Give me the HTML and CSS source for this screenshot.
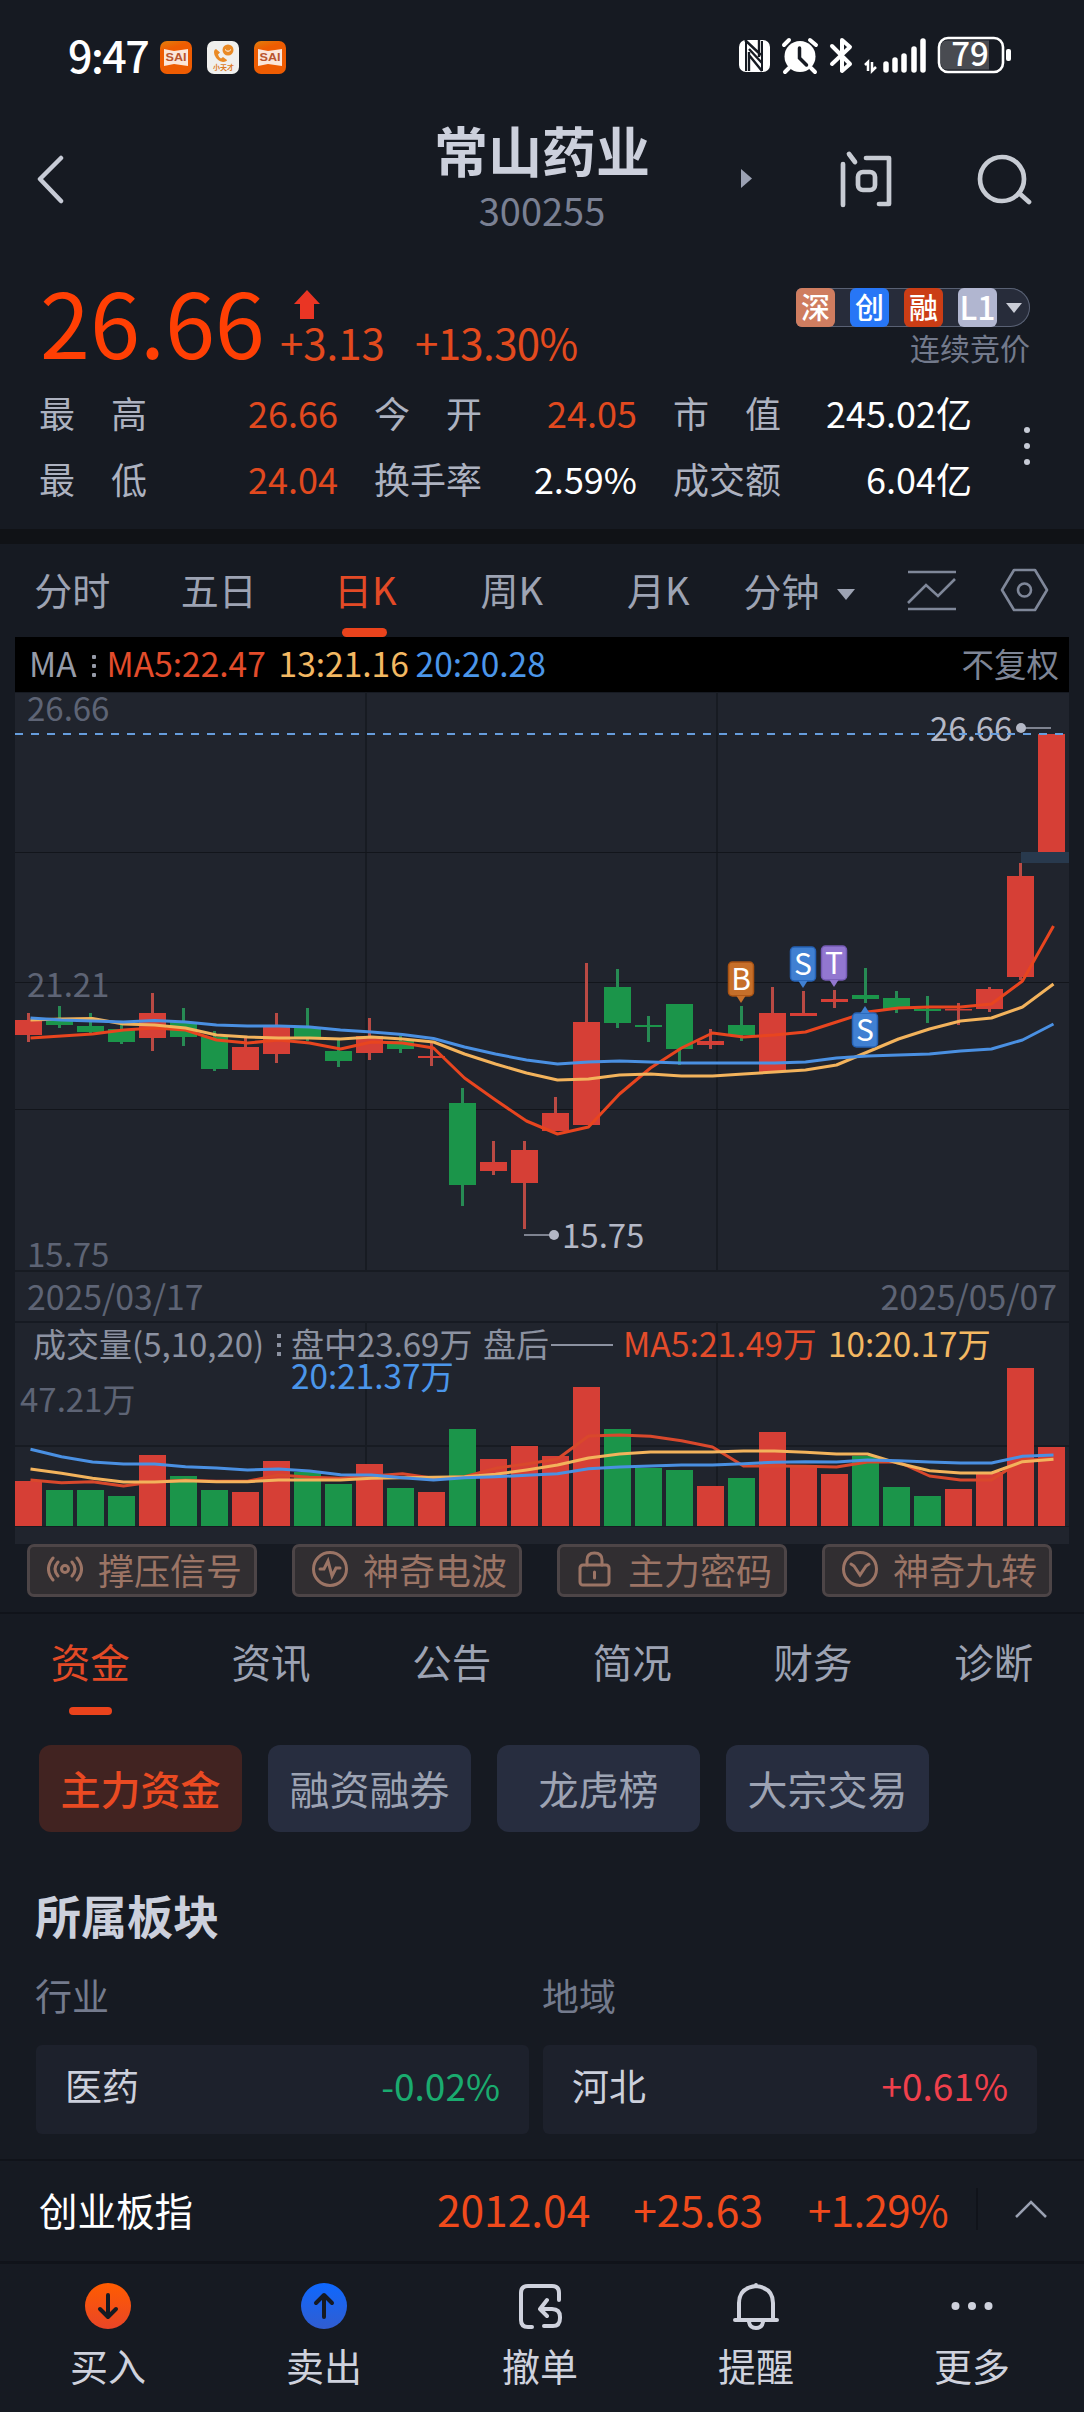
FILE: index.html
```html
<!DOCTYPE html>
<html lang="zh-CN">
<head>
<meta charset="utf-8">
<title>常山药业 300255</title>
<link rel="stylesheet" href="styles.css">
</head>
<body>
<div class="app">
  <div class="status">
    <span class="time">9:47</span>
    <span class="notices">
      <svg width="32" height="33" viewBox="0 0 32 33"><defs><linearGradient id="og" x1="0" y1="0" x2=".3" y2="1"><stop offset="0" stop-color="#e0800c"/><stop offset=".3" stop-color="#ee5c02"/></linearGradient></defs><rect width="32" height="33" rx="7" fill="url(#og)"/><path d="M4 8l10 2 14-2v17l-14-2-10 2z" fill="#fbe6da"/><text x="16" y="20" text-anchor="middle" textLength="21" lengthAdjust="spacingAndGlyphs" class="sai">SAI</text></svg>
      <svg width="32" height="33" viewBox="0 0 32 33"><rect width="32" height="33" rx="7" fill="#f0f0ee"/><circle cx="21" cy="9" r="5.500" fill="#ea8a25"/><path d="M18 8.500q3 3.500 6 0" stroke="#fff" fill="none"/><path d="M9 8q-3 1-1.500 6 2.500 6 8.500 7 4-.5 4-2l-4-3-2 1.500q-2.500-1.500-3-4l2-2z" fill="#ea8a25"/><text x="16.500" y="29" text-anchor="middle" class="xtc">小天才</text></svg>
      <svg width="32" height="33" viewBox="0 0 32 33"><rect width="32" height="33" rx="7" fill="url(#og)"/><path d="M4 8l10 2 14-2v17l-14-2-10 2z" fill="#fbe6da"/><text x="16" y="20" text-anchor="middle" textLength="21" lengthAdjust="spacingAndGlyphs" class="sai">SAI</text></svg>
    </span>
    <svg class="sysicons" width="275" height="40" viewBox="0 0 275 40">
      <rect x="0" y="5" width="31" height="32" rx="7" fill="#fff"/>
      <path d="M7 6v30M23 6v30" stroke="#161a22" stroke-width="2" fill="none"/><path d="M6 5L22 20M10 17v19M10 20l13 16M20 5v17M10 14l13 14" stroke="#161a22" stroke-width="2.400" fill="none"/>
      <circle cx="61" cy="21.500" r="15.500" fill="#fff"/><path d="M45 10l5-5M71 5l6 5M50 33l-4 4M72 33l4 4" stroke="#fff" stroke-width="4" stroke-linecap="round"/><path d="M60.500 13v10l7 7" stroke="#161a22" stroke-width="3.500" fill="none" stroke-linecap="round"/>
      <path d="M93 11l18 18-8 7V5l8 7-18 17" fill="none" stroke="#fff" stroke-width="4" stroke-linejoin="round" stroke-linecap="round"/>
      <path d="M126 30l3-3v9M133 27v9l4-4" fill="none" stroke="#fff" stroke-width="2.500"/>
      <path d="M147 29v6M156 25v10M165 21v14M175 14v21M184 6v29" stroke="#fff" stroke-width="5.500" stroke-linecap="round"/>
      <rect x="200" y="3" width="64" height="34" rx="9" fill="none" stroke="#fff" stroke-width="2.600"/><path d="M208 5.500h42v29h-42q-6 0-6-6v-17q0-6 6-6z" fill="#494b51"/>
      <rect x="267" y="14" width="5" height="12" rx="2" fill="#fff"/>
      <text x="231" y="31" text-anchor="middle" class="batt">79</text>
    </svg>
  </div>

  <header class="header">
    <svg class="back" width="28" height="50" viewBox="0 0 28 50"><path d="M25 4L4 25l21 22" fill="none" stroke="#c7cbd6" stroke-width="4.500" stroke-linecap="round" stroke-linejoin="round"/></svg>
    <div class="title"><h1>常山药业</h1><span class="code">300255</span></div>
    <svg class="headicons" width="300" height="60" viewBox="0 0 300 60">
      <path d="M4 20l11 9.500-11 9.500z" fill="#9ba1b3"/>
      <g fill="none" stroke="#c7cbd3" stroke-width="4.700" stroke-linecap="round" stroke-linejoin="round"><path d="M106 15v41M112 5l6 8M129 9h23v46h-10"/><rect x="121" y="23" width="17" height="18" rx="5"/><circle cx="265" cy="30" r="22"/><path d="M282 44l10 9"/></g>
    </svg>
  </header>

  <section class="quote">
    <div class="pricerow">
      <span class="price">26.66</span>
      <div class="delta">
        <svg width="26" height="30" viewBox="0 0 26 30"><path d="M13 0l13 14h-6v15H6V14H0z" fill="#ea3524"/></svg>
        <div><span>+3.13</span><span class="pct">+13.30%</span></div>
      </div>
      <div class="market">
        <div class="badges"><b class="b1">深</b><b class="b2">创</b><b class="b3">融</b><b class="b4">L1</b><i></i></div>
        <span>连续竞价</span>
      </div>
    </div>
    <div class="stats">
      <div class="grid">
        <span>最　高</span><em class="up">26.66</em><span>今　开</span><em class="up">24.05</em><span>市　值</span><em>245.02亿</em>
        <span>最　低</span><em class="up">24.04</em><span>换手率</span><em>2.59%</em><span>成交额</span><em>6.04亿</em>
      </div>
      <div class="vdots"><i></i><i></i><i></i></div>
    </div>
  </section>

  <nav class="periods">
    <a>分时</a><a>五日</a><a class="on">日K</a><a>周K</a><a>月K</a>
    <div class="minute">分钟<i></i></div>
    <svg width="150" height="48" viewBox="0 0 150 48" fill="none" stroke="#7f8799" stroke-width="2.600"><path d="M1 6h48M1 43h48M1 37l18-18 12 11L48 13"/><path d="M107 4h21l12 20-12 20h-21L95 24z" stroke-linejoin="round"/><circle cx="117.500" cy="24" r="6.500"/></svg>
  </nav>

  <section class="chart">
    <div class="maline"><span>MA</span><u class="colon"><i></i><i></i><i></i></u><span class="c5">MA5:22.47</span><span class="c10">13:21.16</span><span class="c20">20:20.28</span><span class="adj">不复权</span></div>
    <svg id="kline" width="1054" height="629" viewBox="15 692 1054 629"></svg>
    <svg id="volume" width="1054" height="223" viewBox="15 1321 1054 223"></svg>
  </section>

  <div class="signals">
    <div><svg width="36" height="36" viewBox="0 0 36 36"><circle cx="18" cy="18" r="3.500"/><path d="M11 11q-6 7 0 14M25 11q6 7 0 14M6 7q-9 11 0 22M30 7q9 11 0 22"/></svg>撑压信号</div>
    <div><svg width="36" height="36" viewBox="0 0 36 36"><circle cx="18" cy="18" r="16.500"/><path d="M8 18h4l4-8 4 15 4-8h4"/></svg>神奇电波</div>
    <div><svg width="36" height="36" viewBox="0 0 36 36"><rect x="3" y="14" width="29" height="20" rx="3"/><path d="M10 14V9q0-7 7.500-7T25 9v5M17.500 21v6"/></svg>主力密码</div>
    <div><svg width="36" height="36" viewBox="0 0 36 36"><circle cx="18" cy="18" r="16.500"/><path d="M9 13l3 2 6 9 6-9 3-2"/></svg>神奇九转</div>
  </div>

  <nav class="tabs"><a class="on">资金</a><a>资讯</a><a>公告</a><a>简况</a><a>财务</a><a>诊断</a></nav>
  <div class="chips"><span class="on">主力资金</span><span>融资融券</span><span>龙虎榜</span><span>大宗交易</span></div>

  <section class="sectors">
    <h2>所属板块</h2>
    <div class="pair">
      <div><h3>行业</h3><div class="card"><span>医药</span><span class="down">-0.02%</span></div></div>
      <div><h3>地域</h3><div class="card"><span>河北</span><span class="rise">+0.61%</span></div></div>
    </div>
  </section>

  <div class="index"><span>创业板指</span><em class="n1">2012.04</em><em class="n2">+25.63</em><em class="n3">+1.29%</em>
    <svg width="34" height="20" viewBox="0 0 34 20"><path d="M2 18L17 3l15 15" fill="none" stroke="#9aa1b2" stroke-width="2.500"/></svg></div>

  <nav class="actions">
    <a><svg width="48" height="48" viewBox="0 0 48 48"><defs><linearGradient id="buy" x2="0" y2="1"><stop stop-color="#ff5c00"/><stop offset="1" stop-color="#ea4527"/></linearGradient></defs><circle cx="24" cy="24" r="23" fill="url(#buy)"/><path d="M24 13v21M16 27l8 8 8-8" fill="none" stroke="#161a22" stroke-width="4" stroke-linecap="round" stroke-linejoin="round"/></svg>买入</a>
    <a><svg width="48" height="48" viewBox="0 0 48 48"><defs><linearGradient id="sell" x2="0" y2="1"><stop stop-color="#0e68ff"/><stop offset="1" stop-color="#315dd0"/></linearGradient></defs><circle cx="24" cy="24" r="23" fill="url(#sell)"/><path d="M24 35V14M16 21l8-8 8 8" fill="none" stroke="#161a22" stroke-width="4" stroke-linecap="round" stroke-linejoin="round"/></svg>卖出</a>
    <a><svg width="48" height="48" viewBox="0 0 48 48" fill="none" stroke="#cfd2dd" stroke-width="4" stroke-linecap="round" stroke-linejoin="round"><path d="M16 45h-4q-7 0-7-7V11q0-7 7-7h24q7 0 7 7v7M31 18l-7 9 7 7M25 27h11q8 0 8 8v1q0 8-7 8h-9"/></svg>撤单</a>
    <a><svg width="48" height="48" viewBox="0 0 48 48" fill="none" stroke="#cfd2dd" stroke-width="4" stroke-linecap="round"><path d="M3 38h42M7 38V21Q7 6 24 4q17 2 17 17v17M24 3v1M17 40q1 6 7 6t7-6"/></svg>提醒</a>
    <a><svg width="48" height="48" viewBox="0 0 48 48" fill="#cfd2dd"><circle cx="7.500" cy="24" r="4"/><circle cx="24" cy="24" r="4"/><circle cx="40.500" cy="24" r="4"/></svg>更多</a>
  </nav>
</div>
<script src="chart.js"></script>
</body>
</html>
```
FILE: styles.css
```css
* { box-sizing: border-box; margin: 0; padding: 0; }
body { width: 1084px; background: #161a22; color: #fff; font-family: "Noto Sans CJK SC", "Noto Sans", sans-serif; font-size: 36px; line-height: 1; }
.app { display: flex; flex-direction: column; height: 2412px; overflow: hidden; }
svg { display: block; flex: none; }
em, i, u { font-style: normal; text-decoration: none; }

.status { height: 114px; display: flex; align-items: center; padding: 0 70px 0 68px; }
.time { width: 92px; font-size: 43px; letter-spacing: -1.5px; line-height: 46px; padding-bottom: 6px; height: 52px; font-weight: 500; }
.notices { display: flex; gap: 15px; margin-right: auto; }
.sysicons { margin-top: -4px; }
.sai { font: bold 11px "Liberation Sans", sans-serif; fill: #b9552e; }
.xtc { font: bold 7px "Noto Sans CJK SC", sans-serif; fill: #dd7a25; }
.batt { font: 500 33px "Noto Sans CJK SC", sans-serif; fill: #fff; }

.header { height: 146px; display: grid; grid-template-columns: 300px 1fr 300px; align-items: start; }
.back { margin: 40px 0 0 36px; }
.title { text-align: center; padding-top: 9px; }
.title h1 { font-size: 54px; line-height: 54px; font-weight: 700; color: #ccd0dc; }
.code { display: block; margin-top: 7px; font-size: 38px; line-height: 52px; color: #7a8093; }
.headicons { margin: 35px 0 0 -47px; }

.quote { height: 269px; }
.pricerow { display: flex; height: 119px; padding: 0 54px 0 40px; }
.price { width: 240px; font-size: 90px; line-height: 121px; color: #ff3f04; }
.delta { padding-top: 30px; font-size: 42px; }
.delta svg { margin-left: 14px; }
.delta div { display: flex; gap: 30px; line-height: 42px; padding-top: 1px; color: #e34a1e; }
.pct { letter-spacing: -.6px; }
.market { margin-left: auto; padding-top: 28px; display: flex; flex-direction: column; align-items: flex-end; }
.market > span { font-size: 30px; color: #737a8c; line-height: 40px; }
.badges { width: 234px; height: 39px; display: flex; gap: 15px; align-items: center; background: #272c3a; box-shadow: inset 0 0 0 1px #596174; border-radius: 6px 20px 20px 6px; }
.badges b { width: 39px; height: 39px; border-radius: 6px; font-size: 29px; line-height: 37px; font-weight: 500; text-align: center; color: #fff; }
.b1 { background: #cf7d60; }
.b2 { background: #2776f6; }
.b3 { background: #cb3d15; }
.badges .b4 { background: #b1b6d0; font-size: 32px; }
.badges i { margin-left: -6px; border: 8px solid transparent; border-top: 10px solid #c9ccd6; border-bottom: 0; }
.stats { display: flex; padding: 0 54px 0 39px; }
.grid { display: grid; grid-template-columns: 110px 189px 145px 154px 144px 191px; width: 933px; }
.grid > * { line-height: 66px; height: 66px; white-space: nowrap; }
.grid span { color: #adb2c0; }
.grid em { text-align: right; color: #fff; }
.grid em + span { padding-left: 36px; }
.grid span:nth-child(7) { padding-left: 0; }
.grid .up { color: #e1491f; }
.vdots { margin: 48px 0 0 auto; width: 6px; display: flex; flex-direction: column; gap: 10px; }
.vdots i { width: 6px; height: 6px; border-radius: 50%; background: #c7cbd6; }

.periods { border-top: 15px solid #101216; height: 108px; display: flex; color: #9da3b3; font-size: 38px; line-height: 89px; }
.periods a { width: 146.500px; text-align: center; position: relative; right: 1px; }
.periods .on, .tabs .on { color: #e34a26; }
.periods .on::after { content: ""; position: absolute; left: 50px; bottom: 0; width: 45px; height: 9px; border-radius: 5px; background: #ea431c; }
.minute { width: 174px; padding-left: 11px; display: flex; align-items: center; gap: 17px; height: 90px; }
.minute i { border: 9.500px solid transparent; border-top: 11px solid #9da3b3; border-bottom: 0; margin-top: 10px; }
.periods svg { margin-top: 22px; }

.chart { width: 1054px; margin: 0 15px; background: #20242d; }
.maline { height: 55px; background: #000; color: #969ba8; font-size: 33.500px; line-height: 52px; display: flex; padding: 0 10px 0 14px; white-space: nowrap; }
.colon { display: flex; flex-direction: column; gap: 5px; padding: 18px 11px 0 15px; }
.colon i { width: 4px; height: 4px; background: #969ba8; border-radius: 1px; }
.c5 { color: #e34c2b; width: 172px; }
.c10 { color: #f3b862; width: 137px; }
.c20 { color: #4b96ea; }
.adj { margin-left: auto; color: #7e8596; font-size: 32.500px; }
#kline text, #volume text { font: 33px "Noto Sans CJK SC", sans-serif; fill: #5e6475; white-space: pre; }
#kline .dates text { font-size: 33.800px; }
#kline .tag { fill: #b4b8c6; }
#kline .mark { font-size: 30px; font-weight: 400; fill: #fff; }
#volume .gray { fill: #8c92a1; }
#volume .f5 { fill: #e34c2b; font-size: 33.700px; }
#volume .f10 { fill: #f3b862; font-size: 33.300px; }
#volume .f20 { fill: #4b96ea; font-size: 33.300px; }

.signals { height: 70px; padding: 0 27px; display: flex; gap: 35px; border-bottom: 2px solid #10131a; }
.signals div { width: 230px; height: 53px; border: 3px solid #4d4547; border-radius: 7px; background: #312e31; color: #9b7465; display: flex; align-items: center; gap: 15px; padding: 0 0 3px 17px; line-height: 45px; white-space: nowrap; }
.signals svg { fill: none; stroke: #9b7465; stroke-width: 3; stroke-linecap: round; }

.tabs { height: 131px; display: flex; font-size: 39.500px; line-height: 94px; color: #9da3b3; }
.tabs a { width: 181px; text-align: center; position: relative; }
.tabs .on::after { content: ""; position: absolute; left: 69px; top: 93px; width: 43px; height: 8px; border-radius: 4px; background: #ea431c; }
.chips { display: flex; gap: 26px; padding-left: 39px; height: 88px; font-size: 40px; line-height: 87px; }
.chips span { width: 203px; height: 87px; border-radius: 12px; background: #272d3f; color: #9da3b3; text-align: center; }
.chips .on { background: #412321; color: #ea4a22; font-weight: 500; }

.sectors { padding: 56px 47px 0 35px; height: 326px; }
h2 { font-size: 46px; line-height: 50px; color: #ccd0dc; font-weight: 700; }
.pair { display: grid; grid-template-columns: 493px 494px; gap: 14px; padding: 31px 0 0 1px; }
h3 { font-size: 37px; line-height: 50px; color: #747b8d; font-weight: 400; margin-bottom: 25px; position: relative; right: 1px; }
.card { height: 89px; background: #1d212c; border-radius: 6px; padding: 0 29px; display: flex; justify-content: space-between; line-height: 81px; font-size: 37px; color: #ccd0dc; }
.card .down { color: #1aab6f; }
.card .rise { color: #f0404c; }

.index { height: 105px; border-top: 2px solid #10131a; border-bottom: 3px solid #10131a; display: flex; align-items: center; padding: 0 36px 4px 39px; font-size: 38.500px; }
.index em { font-size: 42.500px; color: #f04a1c; }
.n1 { margin-left: auto; }
.n2 { margin-left: 43px; }
.index .n3 { margin-left: 45px; padding-right: 28px; border-right: 2px solid #10131a; font-size: 42px; letter-spacing: -.6px; }
.index svg { margin-left: 36px; }
.actions { display: flex; }
.actions a { width: 216px; display: flex; flex-direction: column; align-items: center; padding-top: 18px; font-size: 38px; line-height: 70px; color: #cfd2dd; }
```
FILE: chart.js
```js
const RED = '#d63f36', GREEN = '#1b954a', WR = '#b94a44', WG = '#278b54';
// per bar: body top, body bottom, wick top, wick bottom, volume bar height
const bars = [
['R',1020,1035,1013,1042,45],['G',1021,1025,1006,1028,36],['G',1026,1032,1013,1033,36],['G',1029,1042,1025,1044,30],
['R',1013,1038,993,1051,71],['G',1022,1037,1008,1046,50],['G',1037,1069,1031,1071,36],['R',1047,1070,1038,1070,34],
['R',1027,1054,1013,1063,65],['G',1028,1039,1008,1041,54],['G',1051,1061,1039,1067,42],['R',1036,1053,1018,1060,62],
['G',1041,1049,1036,1053,38],['R',1056,1058,1041,1066,34],['G',1103,1185,1088,1206,97],['R',1162,1171,1141,1175,67],
['R',1150,1183,1141,1229,80],['R',1113,1131,1097,1131,70],['R',1022,1125,963,1125,139],['G',987,1023,969,1028,97],
['G',1025,1027,1016,1042,58],['G',1004,1049,1004,1065,56],['R',1041,1045,1029,1049,40],['G',1025,1035,1006,1041,48],
['R',1013,1072,987,1072,94],['R',1013,1016,991,1016,60],['R',999,1002,990,1008,52],['G',995,999,968,1003,70],
['G',998,1009,991,1013,39],['G',1009,1011,996,1023,30],['R',1009,1010,1003,1025,37],['R',989,1009,987,1012,54],
['R',876,977,863,980,158],['R',734,852,734,852,79]];
const ma = {
  '#e8451f': [1038,1036,1034,1030,1028,1030,1040,1043,1040,1043,1049,1042,1043,1048,1078,1100,1121,1134,1127,1094,1068,1048,1033,1037,1035,1032,1022,1012,1008,1007,1007,1004,981,926],
  '#f3b35c': [1020,1019,1018.5,1024,1025,1028,1035,1037,1038,1038,1039,1037,1039,1042,1054,1064,1073,1080,1079,1075,1074,1076,1076,1074,1072,1070,1065,1052,1039,1029,1021,1018,1007,984],
  '#4a90e2': [1018,1020,1021,1022,1020.5,1022,1025,1026,1026,1027,1030,1032,1034.5,1038.5,1047,1054,1060,1064,1062,1061,1062,1063,1063,1063,1063,1062,1058,1056,1055,1054,1051,1049,1040,1024]
};
const vma = {
  '#d9482c': [660,668,665,678,665,661,664,664,645,652,655,648,641,655,650,625,612,597,528,525,529,542,561,618,618,619,621,606,606,648,660,660,600,597],
  '#f3b35c': [627,640,655,666,666,662,665,665,660,660,660,655,653,652,650,643,630,615,594,582,576,576,576,573,573,577,582,582,610,632,639,639,605,598],
  '#4a90e2': [568,590,606,612,612,620,624,630,627,633,644,645,653,660,653,650,646,641,626,621,618,615,615,611,607,605,606,600,602,606,609,609,589,585]
};
const rect = (x, y, w, h, f) => `<rect x="${x}" y="${y}" width="${w}" height="${h}" fill="${f}"/>`;
const text = (x, y, s, c = '', a = 'start') => `<text x="${x}" y="${y}" class="${c}" text-anchor="${a}">${s}</text>`;
const line = (ys, c) => `<polyline points="${ys.map((y, i) => (30.5 + 31 * i) + ',' + y).join(' ')}" fill="none" stroke="${c}" stroke-width="3" stroke-linejoin="round"/>`;

let k = rect(15, 692, 1054, 1, '#161a22') + rect(365, 692, 2, 579, '#171b22') + rect(716, 692, 2, 579, '#171b22');
[852, 982, 1109].forEach(y => k += rect(15, y, 1054, 1, '#12151b'));
k += rect(15, 1270, 1054, 2, '#171b22');
k += text(27, 721, '26.66') + text(27, 997, '21.21') + text(27, 1267, '15.75');
k += `<g class="dates">${text(27, 1310, '2025/03/17')}${text(1057, 1310, '2025/05/07', '', 'end')}</g>`;
k += rect(1021, 852, 48, 11, '#28394d');
bars.forEach(([c, t, b, h, l], i) => {
  const x = 15 + 31 * i;
  k += rect(x + 12, h, 3, l - h, c === 'R' ? WR : WG) + rect(x, t, 27, Math.max(b - t, 1.5), c === 'R' ? RED : GREEN);
});
k += text(930, 741, '26.66', 'tag') + rect(1021, 727, 30, 2, '#7e8390') + '<circle cx="1021" cy="728" r="5" fill="#b4b8c6"/>';
k += '<path d="M15 734H1064" stroke="#669ddd" stroke-width="2" stroke-dasharray="8 8"/>';
k += rect(524, 1234, 26, 2, '#7e8390') + '<circle cx="554" cy="1235" r="5" fill="#b4b8c6"/>' + text(562, 1248, '15.75', 'tag');
for (const c in ma) k += line(ma[c], c);
const mark = (x, y, s, f, st, up) => `<rect x="${x}" y="${y}" width="25" height="34" rx="4" fill="${f}" stroke="${st}" stroke-width="1.5"/><path d="${up ? `M${x + 8} ${y}l4.500 -7 4.500 7z` : `M${x + 8} ${y + 34}l4.500 7 4.500-7z`}" fill="${f}"/>${text(x + 12.5, y + 28, s, 'mark', 'middle')}`;
k += mark(728.5, 962, 'B', '#c66f2a', '#a85213') + mark(790.5, 947, 'S', '#4080d2', '#2561b5') + mark(821.5, 946, 'T', '#9277d0', '#755bb5') + mark(852.5, 1013, 'S', '#4080d2', '#2561b5', true);
document.getElementById('kline').innerHTML = k;

let v = rect(15, 1321, 1054, 2, '#161a22') + rect(365, 1322, 2, 204, '#171b22') + rect(716, 1322, 2, 204, '#171b22') + rect(15, 1445, 1054, 2, '#171b22') + rect(15, 1526, 1054, 1, '#171b22');
bars.forEach((b, i) => v += rect(15 + 31 * i, 1526 - b[5], 27, b[5], b[0] === 'R' ? RED : GREEN));
v += text(33, 1357, '成交量(5,10,20)', 'gray') + [1334, 1343, 1352].map(y => rect(277, y, 4, 4, '#8c92a1')).join('');
v += text(291, 1357, '盘中23.69万', 'gray') + text(483, 1357, '盘后', 'gray') + rect(551, 1344, 62, 2, '#8c92a1');
v += text(623, 1357, 'MA5:21.49万', 'f5') + text(828, 1357, '10:20.17万', 'f10') + text(291, 1389, '20:21.37万', 'f20') + text(20, 1412, '47.21万');
for (const c in vma) v += line(vma[c].map(y => 1260 + y / 3), c);
document.getElementById('volume').innerHTML = v;
```
